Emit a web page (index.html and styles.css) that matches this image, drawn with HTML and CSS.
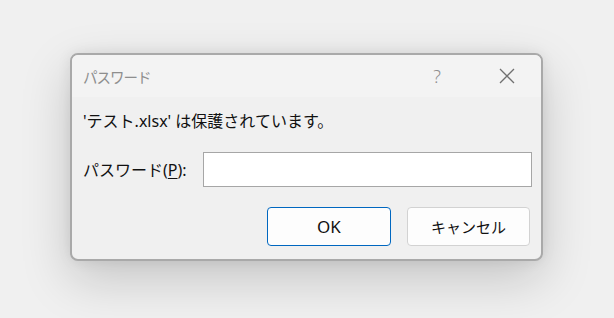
FILE: index.html
```html
<!DOCTYPE html>
<html lang="ja">
<head>
    <meta charset="UTF-8">
    <meta name="viewport" content="width=device-width, initial-scale=1.0">
    <title>パスワード</title>
    <link rel="stylesheet" href="styles.css">
</head>
<body>

<div class="dialog">
    <header class="titlebar">
        <div class="title">パスワード</div>
        <div class="help">?</div>
        <div class="close">
            <svg width="16" height="16" viewBox="0 0 16 16">
                <path d="M1 1 L15 15 M15 1 L1 15" stroke="#707070" stroke-width="1.3" fill="none"/>
            </svg>
        </div>
    </header>
    <div class="content">
        <p class="message">'テスト.xlsx' は保護されています。</p>
        <div class="field">
            <label for="password">パスワード(<u>P</u>):</label>
            <input type="password" id="password">
        </div>
        <div class="buttons">
            <button class="btn default">OK</button>
            <button class="btn">キャンセル</button>
        </div>
    </div>
</div>

</body>
</html>
```

FILE: styles.css
```css
body {
    margin: 0;
    padding: 53px 0 0 70px;
    height: 318px;
    box-sizing: border-box;
    background-color: #f0f0f0;
    font-family: "Noto Sans", "Noto Sans CJK JP", sans-serif;
    overflow: hidden;
}

.dialog {
    width: 473px;
    height: 208px;
    box-sizing: border-box;
    border: 2px solid #a9a9a9;
    border-radius: 8px;
    background-color: #f0f0f0;
    box-shadow: 0 18px 50px rgba(0,0,0, 0.18), 0 0 14px rgba(0,0,0, 0.08);
    overflow: hidden;
    display: flex;
    flex-direction: column;
}

.titlebar {
    height: 42px;
    flex-shrink: 0;
    display: flex;
    align-items: center;
    background-color: #f3f3f3;
    padding-left: 11px;
}
.title {
    flex: 1;
    font-size: 14.5px;
    letter-spacing: -1px;
    color: #8e8e8e;
    font-family: "Noto Sans CJK JP", sans-serif;
}
.help {
    width: 20px;
    text-align: center;
    font-size: 18px;
    font-weight: 300;
    color: #8e8e8e;
    margin-right: 52px;
}
.close {
    width: 16px;
    height: 16px;
    margin-right: 26px;
}
.close svg {
    display: block;
}

.content {
    flex: 1;
    padding: 14px 9px 0 11px;
    font-size: 16px;
    color: #111;
}
.message {
    margin: 0;
    line-height: 20px;
}

.field {
    display: flex;
    align-items: center;
    margin-top: 21px;
}
.field label {
    width: 120px;
    line-height: 20px;
}
.field u {
    text-underline-offset: 2px;
}
.field input {
    width: 330px;
    height: 35px;
    box-sizing: border-box;
    border: 1px solid #a6a6a6;
    background-color: #fff;
    outline: none;
}

.buttons {
    display: flex;
    justify-content: flex-end;
    gap: 16px;
    margin-top: 20px;
    padding-right: 2px;
}
.btn {
    width: 123px;
    height: 39px;
    box-sizing: border-box;
    border: 1px solid #d2d2d2;
    border-radius: 4px;
    background-color: #fdfdfd;
    font-family: "Noto Sans", "Noto Sans CJK JP", sans-serif;
    font-size: 15px;
    color: #111;
}
.btn.default {
    width: 124px;
    font-size: 17px;
    border: 1.5px solid #0067c0;
}
```
